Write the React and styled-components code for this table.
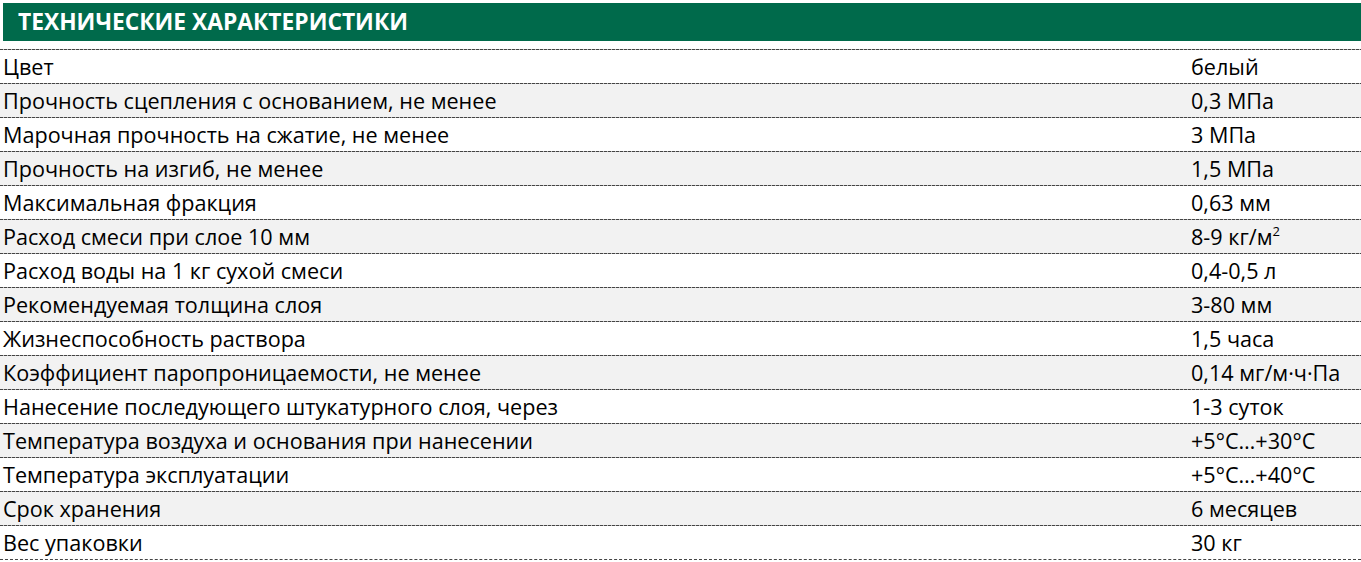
import React from "react";
import styled, { createGlobalStyle } from "styled-components";

const Global = createGlobalStyle`
  html, body { margin: 0; padding: 0; background: #fff; }
  body { font-family: "Open Sans", "Noto Sans", sans-serif; color: #000; }
`;

const Page = styled.div`
  width: 1361px;
  padding-top: 3px;
`;

const Header = styled.div`
  margin-left: 3px;
  height: 38px;
  background: #006a4b;
  display: flex;
  align-items: center;
  padding-left: 15px;
  margin-bottom: 8px;
`;

const Title = styled.h2`
  margin: 0;
  font-family: "Open Sans", sans-serif;
  font-weight: 700;
  font-size: 22.8px;
  line-height: 1;
  color: #fff;
  letter-spacing: 0;
`;

const Table = styled.div`
  display: flex;
  flex-direction: column;
`;

const Row = styled.div`
  display: grid;
  grid-template-columns: 1188px 1fr;
  height: 34px;
  box-sizing: border-box;
  align-items: center;
  padding: 2px 0 0 3px;
  background-color: ${(p) => (p.$shaded ? "#f2f2f2" : "#fff")};
  background-image: repeating-linear-gradient(
    to right,
    #444 0 3px,
    #bbb 3px 4px
  );
  background-size: 100% 1px;
  background-repeat: no-repeat;
  background-position: 0 0;
  &:last-child {
    border-bottom: 1px dashed #444;
    height: 35px;
  }
`;

const Cell = styled.span`
  font-size: 21.6px;
  line-height: 1;
  white-space: nowrap;
  letter-spacing: 0;
  color: #000;
`;

const Sup = styled.sup`
  font-size: 13px;
  vertical-align: 9px;
  line-height: 0;
`;

const rows = [
  ["Цвет", "белый"],
  ["Прочность сцепления с основанием, не менее", "0,3 МПа"],
  ["Марочная прочность на сжатие, не менее", "3 МПа"],
  ["Прочность на изгиб, не менее", "1,5 МПа"],
  ["Максимальная фракция", "0,63 мм"],
  ["Расход смеси при слое 10 мм", <>8-9 кг/м<Sup>2</Sup></>],
  ["Расход воды на 1 кг сухой смеси", "0,4-0,5 л"],
  ["Рекомендуемая толщина слоя", "3-80 мм"],
  ["Жизнеспособность раствора", "1,5 часа"],
  ["Коэффициент паропроницаемости, не менее", "0,14 мг/м·ч·Па"],
  ["Нанесение последующего штукатурного слоя, через", "1-3 суток"],
  ["Температура воздуха и основания при нанесении", "+5°C…+30°C"],
  ["Температура эксплуатации", "+5°C…+40°C"],
  ["Срок хранения", "6 месяцев"],
  ["Вес упаковки", "30 кг"],
];

export default function App() {
  return (
    <Page>
      <Global />
      <Header>
        <Title>ТЕХНИЧЕСКИЕ ХАРАКТЕРИСТИКИ</Title>
      </Header>
      <Table>
        {rows.map(([k, v], i) => (
          <Row key={i} $shaded={i % 2 === 1}>
            <Cell>{k}</Cell>
            <Cell>{v}</Cell>
          </Row>
        ))}
      </Table>
    </Page>
  );
}
